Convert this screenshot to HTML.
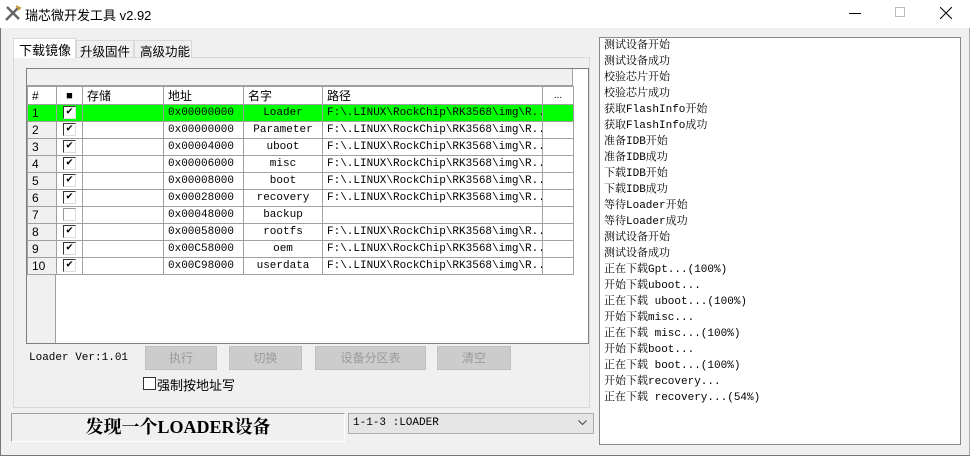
<!DOCTYPE html>
<html><head><meta charset="utf-8"><style>
*{box-sizing:border-box;margin:0;padding:0}
body{width:970px;height:456px;background:#f0f0f0;position:relative;overflow:hidden;font-family:"Liberation Sans","Noto Sans CJK SC",sans-serif;font-size:12px;color:#000}
.a{position:absolute}
.mono{font-family:"Liberation Mono","Noto Serif CJK SC",monospace;font-size:11px}
table{border-collapse:collapse;position:absolute;left:27px;top:86px;table-layout:fixed;width:546px}
td{height:17px;border:1px solid #a0a0a0;padding:0 4px;white-space:nowrap;overflow:hidden;font-family:"Liberation Mono","Noto Serif CJK SC",monospace;font-size:11px;background:#fff}
tr.h td{height:17px;font-family:"Liberation Sans","Noto Sans CJK SC",sans-serif;font-size:12px;background:#fff}
td.n{background:#f0f0f0;font-family:"Liberation Sans",sans-serif;font-size:12px}
tr.g td{background:#00ff00}
td.c{text-align:center}
.cb{display:inline-block;width:13px;height:13px;border:1px solid #333;border-right-color:#ddd;border-bottom-color:#ddd;background:#fff;vertical-align:middle;font-size:11px;line-height:11px;text-align:center;font-weight:bold}
.btn{position:absolute;top:346px;height:24px;background:#cccccc;border:1px solid #c0c0c0;color:#9a9a9a;text-align:center;line-height:22px;font-size:12px}
.log div{height:16px;line-height:16px;font-family:"Liberation Mono","Noto Serif CJK SC",monospace;font-size:11px;white-space:nowrap}
.tab{position:absolute;font-size:13px;white-space:nowrap;border:1px solid #d9d9d9;border-bottom:none}
</style></head><body>
<div class="a" style="left:0;top:0;width:970px;height:28px;background:#fff"></div>
<div class="a" style="left:0;top:28px;width:1px;height:428px;background:#777"></div>
<div class="a" style="left:969px;top:28px;width:1px;height:428px;background:#aaa"></div>
<div class="a" style="left:0;top:455px;width:970px;height:1px;background:#777"></div>
<svg class="a" style="left:4px;top:4px" width="18" height="18"><path d="M2 16L15 3M3 3l12 12" stroke="#666" stroke-width="2.5"/><path d="M12 2l4 2-2 2" stroke="#c8a040" stroke-width="2" fill="none"/></svg>
<div class="a" style="left:25px;top:5px;font-size:13px">瑞芯微开发工具 v2.92</div>
<div class="a" style="left:849px;top:13px;width:12px;height:1px;background:#000"></div>
<div class="a" style="left:895px;top:7px;width:10px;height:10px;border:1px solid #bbb"></div>
<svg class="a" style="left:940px;top:7px" width="12" height="12"><path d="M0 0L12 12M12 0L0 12" stroke="#000"/></svg>

<div class="a" style="left:13px;top:57px;width:577px;height:351px;border:1px solid #d9d9d9;background:#f0f0f0"></div>
<div class="tab" style="left:13px;top:38px;width:63px;height:20px;background:#fff;padding:1px 0 0 5px">下载镜像</div>
<div class="tab" style="left:76px;top:40px;width:58px;height:17px;padding:0 0 0 3px;font-size:12.5px">升级固件</div>
<div class="tab" style="left:134px;top:40px;width:58px;height:17px;padding:0 0 0 5px;font-size:12.5px">高级功能</div>

<div class="a" style="left:26px;top:68px;width:563px;height:276px;border:1px solid #808080;background:#fff"></div>
<div class="a" style="left:27px;top:69px;width:546px;height:17px;background:#f0f0f0;border-bottom:1px solid #a0a0a0;border-right:1px solid #a0a0a0"></div>
<div class="a" style="left:27px;top:86px;width:29px;height:257px;background:#f0f0f0;border-right:1px solid #a0a0a0"></div>
<table>
<colgroup><col style="width:29px"><col style="width:26px"><col style="width:81px"><col style="width:80px"><col style="width:79px"><col style="width:220px"><col style="width:31px"></colgroup>
<tr class="h"><td class="n">#</td><td class="c" style="font-size:11px">■</td><td>存储</td><td>地址</td><td>名字</td><td>路径</td><td class="c" style="font-size:10px">...</td></tr>
<tr class="g"><td class="n">1</td><td class="c"><span class="cb">✔</span></td><td></td><td>0x00000000</td><td class="c">Loader</td><td>F:\.LINUX\RockChip\RK3568\img\R...</td><td></td></tr>
<tr><td class="n">2</td><td class="c"><span class="cb">✔</span></td><td></td><td>0x00000000</td><td class="c">Parameter</td><td>F:\.LINUX\RockChip\RK3568\img\R...</td><td></td></tr>
<tr><td class="n">3</td><td class="c"><span class="cb">✔</span></td><td></td><td>0x00004000</td><td class="c">uboot</td><td>F:\.LINUX\RockChip\RK3568\img\R...</td><td></td></tr>
<tr><td class="n">4</td><td class="c"><span class="cb">✔</span></td><td></td><td>0x00006000</td><td class="c">misc</td><td>F:\.LINUX\RockChip\RK3568\img\R...</td><td></td></tr>
<tr><td class="n">5</td><td class="c"><span class="cb">✔</span></td><td></td><td>0x00008000</td><td class="c">boot</td><td>F:\.LINUX\RockChip\RK3568\img\R...</td><td></td></tr>
<tr><td class="n">6</td><td class="c"><span class="cb">✔</span></td><td></td><td>0x00028000</td><td class="c">recovery</td><td>F:\.LINUX\RockChip\RK3568\img\R...</td><td></td></tr>
<tr><td class="n">7</td><td class="c"><span class="cb" style="border-color:#999 #ddd #ddd #999"></span></td><td></td><td>0x00048000</td><td class="c">backup</td><td></td><td></td></tr>
<tr><td class="n">8</td><td class="c"><span class="cb">✔</span></td><td></td><td>0x00058000</td><td class="c">rootfs</td><td>F:\.LINUX\RockChip\RK3568\img\R...</td><td></td></tr>
<tr><td class="n">9</td><td class="c"><span class="cb">✔</span></td><td></td><td>0x00C58000</td><td class="c">oem</td><td>F:\.LINUX\RockChip\RK3568\img\R...</td><td></td></tr>
<tr><td class="n">10</td><td class="c"><span class="cb">✔</span></td><td></td><td>0x00C98000</td><td class="c">userdata</td><td>F:\.LINUX\RockChip\RK3568\img\R...</td><td></td></tr>
</table>

<div class="a mono" style="left:29px;top:352px">Loader Ver:1.01</div>
<div class="btn" style="left:145px;width:72px">执行</div>
<div class="btn" style="left:229px;width:73px">切换</div>
<div class="btn" style="left:315px;width:111px">设备分区表</div>
<div class="btn" style="left:437px;width:74px">清空</div>
<div class="a" style="left:143px;top:377px;width:13px;height:13px;border:1px solid #333;background:#fff"></div>
<div class="a" style="left:157px;top:375px;font-size:13px">强制按地址写</div>

<div class="a" style="left:11px;top:413px;height:29px;border:1px solid #a0a0a0;border-right-color:#fff;border-bottom-color:#fff;width:334px"></div>
<div class="a" style="left:12px;top:414px;width:332px;text-align:center;font-family:'Liberation Serif','Noto Serif CJK SC',serif;font-weight:bold;font-size:18px;line-height:27px">发现一个LOADER设备</div>
<div class="a mono" style="left:348px;top:413px;width:246px;height:21px;border:1px solid #adadad;background:#e5e5e5;padding:2px 4px;line-height:15px">1-1-3 :LOADER</div>
<svg class="a" style="left:578px;top:420px" width="9" height="6"><path d="M0.5 0.5L4.5 4.5L8.5 0.5" stroke="#444" fill="none"/></svg>

<div class="a log" style="left:599px;top:37px;width:362px;height:408px;border:1px solid #828790;background:#fff;padding:0 0 0 4px">
<div>测试设备开始</div><div>测试设备成功</div><div>校验芯片开始</div><div>校验芯片成功</div><div>获取FlashInfo开始</div><div>获取FlashInfo成功</div><div>准备IDB开始</div><div>准备IDB成功</div><div>下载IDB开始</div><div>下载IDB成功</div><div>等待Loader开始</div><div>等待Loader成功</div><div>测试设备开始</div><div>测试设备成功</div><div>正在下载Gpt...(100%)</div><div>开始下载uboot...</div><div>正在下载 uboot...(100%)</div><div>开始下载misc...</div><div>正在下载 misc...(100%)</div><div>开始下载boot...</div><div>正在下载 boot...(100%)</div><div>开始下载recovery...</div><div>正在下载 recovery...(54%)</div>
</div>
</body></html>
